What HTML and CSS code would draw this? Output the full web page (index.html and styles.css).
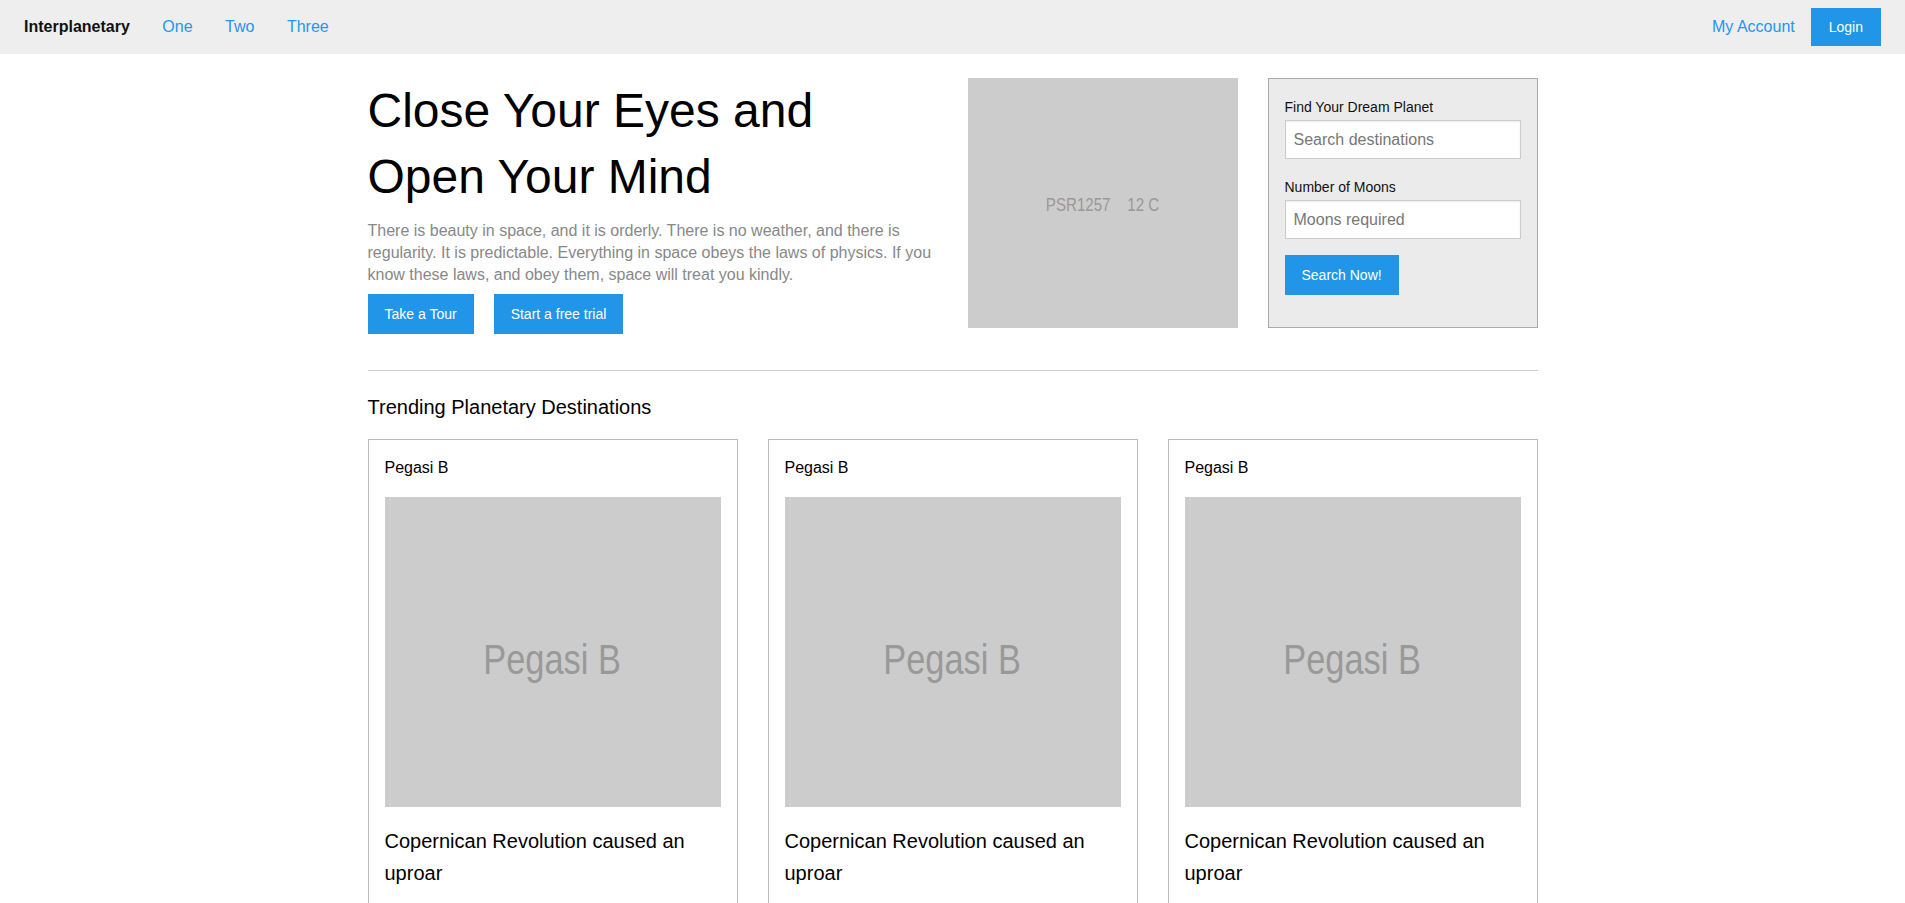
FILE: index.html
```html
<!DOCTYPE html>
<html lang="en">
<head>
<meta charset="utf-8">
<title>Interplanetary</title>
<link rel="stylesheet" href="styles.css">
</head>
<body>
<nav class="topbar">
  <div class="nav-left">
    <a class="brand" href="#">Interplanetary</a>
    <a class="nav-link" href="#">One</a>
    <a class="nav-link" href="#">Two</a>
    <a class="nav-link" href="#">Three</a>
  </div>
  <div class="nav-right">
    <a class="nav-link" href="#">My Account</a>
    <button class="btn btn-login">Login</button>
  </div>
</nav>

<main class="container">
  <section class="hero">
    <div class="hero-text">
      <h1 class="hero-title">Close Your Eyes and<br>Open Your Mind</h1>
      <p class="hero-lead">There is beauty in space, and it is orderly. There is no weather, and there is regularity. It is predictable. Everything in space obeys the laws of physics. If you know these laws, and obey them, space will treat you kindly.</p>
      <div class="hero-actions">
        <button class="btn">Take a Tour</button>
        <button class="btn">Start a free trial</button>
      </div>
    </div>
    <div class="placeholder hero-image"><span class="ph-text ph-small">PSR1257    12 C</span></div>
    <form class="search-box">
      <label class="field-label" for="dest">Find Your Dream Planet</label>
      <input class="field-input" id="dest" type="text" placeholder="Search destinations">
      <label class="field-label second" for="moons">Number of Moons</label>
      <input class="field-input" id="moons" type="text" placeholder="Moons required">
      <button class="btn btn-search" type="button">Search Now!</button>
    </form>
  </section>

  <hr class="divider">

  <h2 class="section-title">Trending Planetary Destinations</h2>

  <section class="cards">
    <article class="card">
      <h3 class="card-title">Pegasi B</h3>
      <div class="placeholder card-image"><span class="ph-text ph-large">Pegasi B</span></div>
      <p class="card-text">Copernican Revolution caused an uproar</p>
    </article>
    <article class="card">
      <h3 class="card-title">Pegasi B</h3>
      <div class="placeholder card-image"><span class="ph-text ph-large">Pegasi B</span></div>
      <p class="card-text">Copernican Revolution caused an uproar</p>
    </article>
    <article class="card">
      <h3 class="card-title">Pegasi B</h3>
      <div class="placeholder card-image"><span class="ph-text ph-large">Pegasi B</span></div>
      <p class="card-text">Copernican Revolution caused an uproar</p>
    </article>
  </section>
</main>
</body>
</html>
```

FILE: styles.css
```css
* {
  box-sizing: border-box;
}

body {
  margin: 0;
  font-family: "Liberation Sans", Arial, sans-serif;
  color: #111;
  background: #fff;
}

/* Top bar */
.topbar {
  display: flex;
  align-items: center;
  justify-content: space-between;
  height: 54px;
  padding: 0 24px;
  background: #eeeeee;
}

.nav-left,
.nav-right {
  display: flex;
  align-items: center;
}

.nav-left {
  gap: 32.5px;
}

.nav-right {
  gap: 16px;
}

.brand {
  font-size: 16px;
  font-weight: bold;
  color: #111;
  text-decoration: none;
}

.nav-link {
  font-size: 16px;
  color: #2196f3;
  text-decoration: none;
}

/* Buttons */
.btn {
  display: inline-block;
  border: 0;
  margin: 0;
  padding: 10px 17px;
  background: #2196e8;
  color: #fff;
  font-family: "Liberation Sans", Arial, sans-serif;
  font-size: 14px;
  line-height: 20px;
  cursor: pointer;
}

.btn-login {
  padding: 9px 18px;
}

/* Main */
.container {
  width: 1170px;
  margin: 24px auto 0;
}

.hero {
  display: grid;
  grid-template-columns: 570px 270px 270px;
  column-gap: 30px;
  align-items: start;
  margin-bottom: 36px;
}

.hero-title {
  margin: 0;
  font-size: 48px;
  line-height: 66px;
  font-weight: normal;
  color: #000;
}

.hero-lead {
  margin: 10px 0 0;
  font-size: 16px;
  line-height: 22px;
  color: #888;
}

.hero-actions {
  display: flex;
  gap: 20px;
  margin-top: 8px;
}

.placeholder {
  display: flex;
  align-items: center;
  justify-content: center;
  background: #cccccc;
}

.ph-text {
  display: inline-block;
  font-family: "Liberation Sans", Arial, sans-serif;
  color: #999;
  white-space: pre;
}

.ph-small {
  font-size: 18px;
  transform: translateY(2px) scaleX(0.84);
}

.ph-large {
  font-size: 43px;
  transform: translateY(7px) scaleX(0.8);
}

.hero-image {
  height: 250px;
}

/* Search box */
.search-box {
  height: 250px;
  padding: 18px 16px 16px;
  background: #ebebeb;
  border: 1px solid #aaaaaa;
  display: flex;
  flex-direction: column;
  align-items: flex-start;
}

.field-label {
  display: block;
  font-size: 14px;
  line-height: 20px;
  color: #111;
  margin-bottom: 3px;
}

.field-label.second {
  margin-top: 18px;
}

.field-input {
  width: 100%;
  height: 39px;
  padding: 0 8px;
  border: 1px solid #cccccc;
  box-shadow: inset 0 1px 2px rgba(0, 0, 0, 0.08);
  background: #fff;
  font-family: "Liberation Sans", Arial, sans-serif;
  font-size: 16px;
  color: #333;
}

.field-input::placeholder {
  color: #777;
}

.btn-search {
  margin-top: 16px;
}

/* Divider and section */
.divider {
  margin: 0;
  border: 0;
  border-top: 1px solid #cccccc;
}

.section-title {
  margin: 22px 0 18px;
  font-size: 20px;
  line-height: 28px;
  font-weight: normal;
  color: #000;
}

/* Cards */
.cards {
  display: grid;
  grid-template-columns: repeat(3, 1fr);
  column-gap: 30px;
}

.card {
  border: 1px solid #bbbbbb;
  padding: 16px;
}

.card-title {
  margin: 0 0 17px;
  font-size: 16px;
  line-height: 24px;
  font-weight: normal;
  color: #000;
}

.card-image {
  height: 310px;
}

.card-text {
  margin: 18px 0 0;
  font-size: 20px;
  line-height: 32px;
  color: #000;
}
```
